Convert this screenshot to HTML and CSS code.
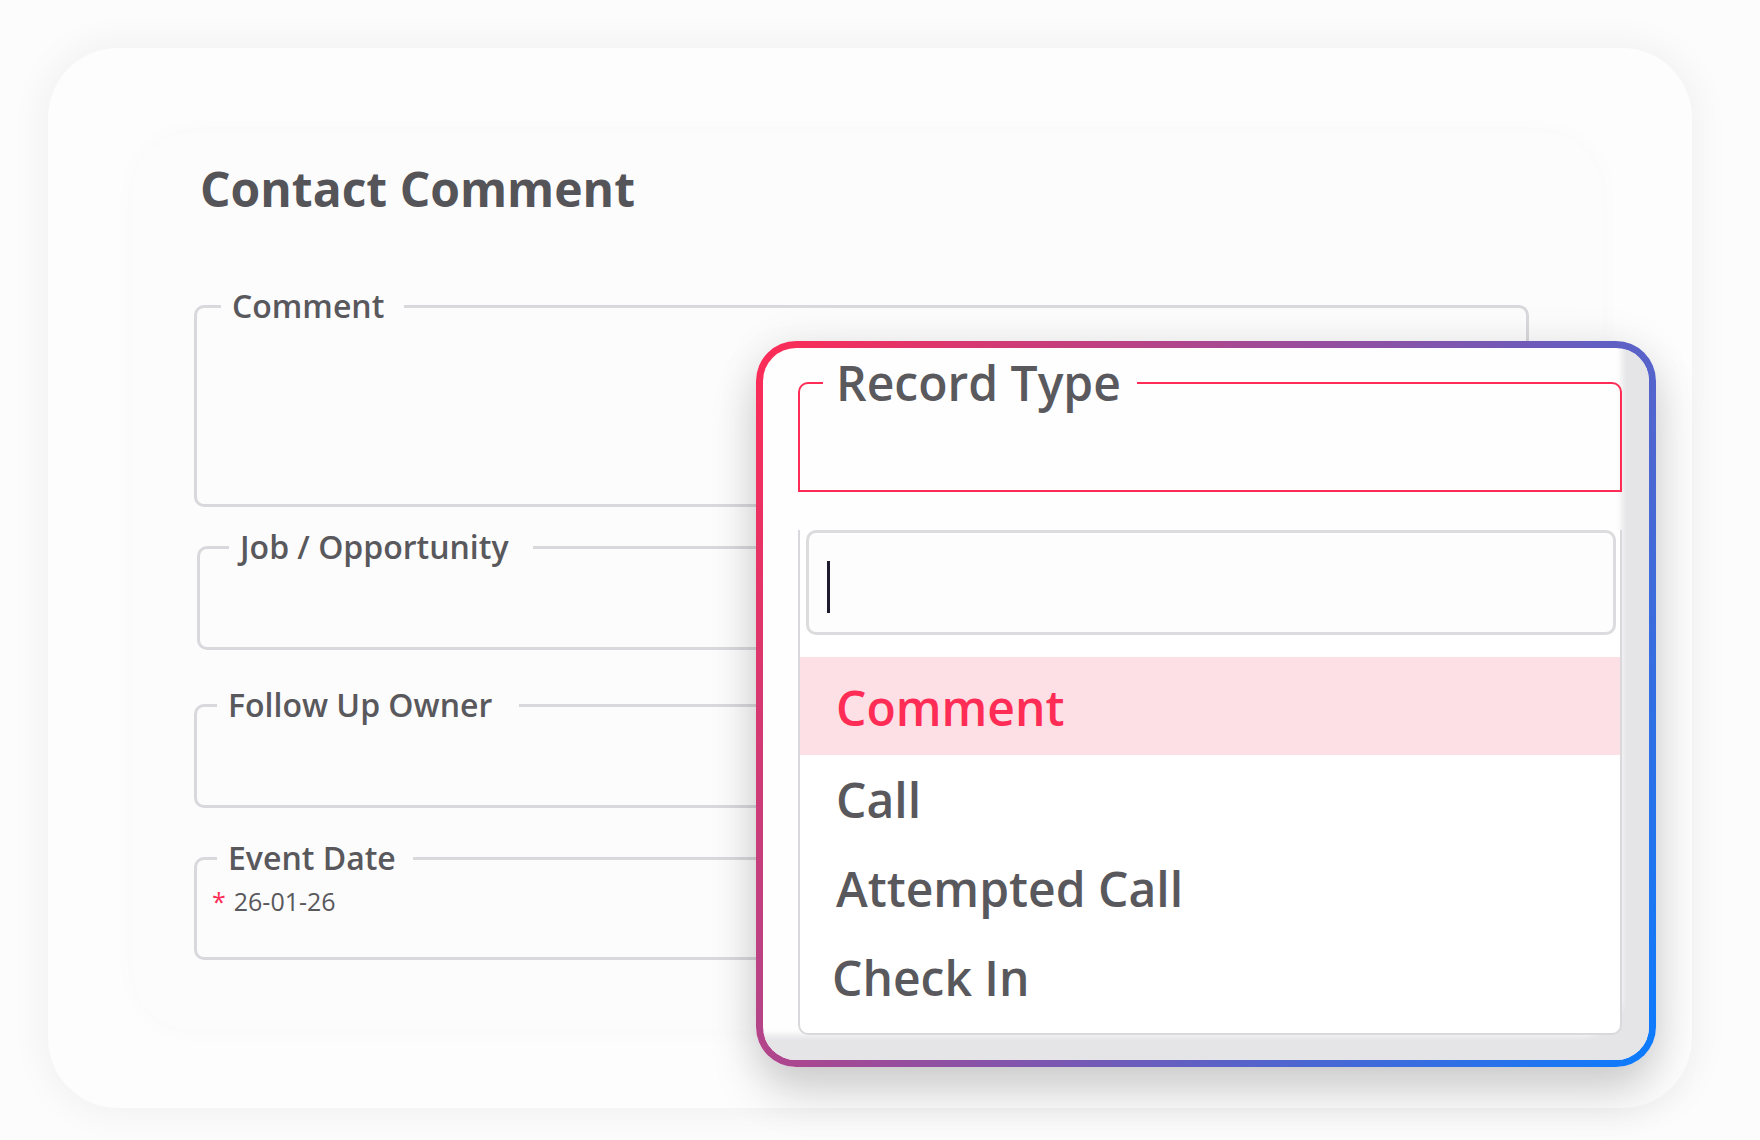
FILE: index.html
```html
<!DOCTYPE html>
<html lang="en">
<head>
<meta charset="utf-8">
<title>Contact Comment</title>
<link rel="stylesheet" href="styles.css">
</head>
<body>
<div class="stage">
  <div class="card">
    <div class="panel">
      <h1 class="title">Contact Comment</h1>
      <fieldset class="field field-comment">
        <legend>Comment</legend>
        <div class="field-body"></div>
      </fieldset>
      <fieldset class="field field-job">
        <legend>Job / Opportunity</legend>
        <div class="field-body"></div>
      </fieldset>
      <fieldset class="field field-owner">
        <legend>Follow Up Owner</legend>
        <div class="field-body"></div>
      </fieldset>
      <fieldset class="field field-date">
        <legend>Event Date</legend>
        <div class="field-body"><span class="req">*</span>26-01-26</div>
      </fieldset>
    </div>

    <div class="popup">
      <div class="popup-inner">
        <fieldset class="rt">
          <legend>Record Type</legend>
          <div class="rt-body"></div>
        </fieldset>
        <div class="listbox">
          <div class="search"><span class="caret"></span></div>
          <ul class="options">
            <li class="opt active">Comment</li>
            <li class="opt">Call</li>
            <li class="opt">Attempted Call</li>
            <li class="opt opt-last">Check In</li>
          </ul>
        </div>
      </div>
    </div>
  </div>
</div>
</body>
</html>
```

FILE: styles.css
```css
* { box-sizing: border-box; }

html, body {
  margin: 0;
  padding: 0;
  overflow: hidden;
}

body {
  background: #fcfcfc;
  font-family: "Open Sans", "Noto Sans", sans-serif;
  color: #59585c;
}

.stage {
  width: 1760px;
  height: 1140px;
  padding: 48px 0 0 48px;
}

.card {
  position: relative;
  width: 1644px;
  height: 1060px;
  background: #fdfdfe;
  border-radius: 70px;
  box-shadow: 0 0 34px 8px rgba(0, 0, 0, 0.045);
  padding: 85px 0 0 85px;
}

.panel {
  width: 1469px;
  height: 897px;
  border-radius: 60px;
  background: #fcfcfd;
  box-shadow: 0 0 26px rgba(0, 0, 0, 0.025);
  padding: 24px 0 0 61px;
  display: flex;
  flex-direction: column;
  align-items: flex-start;
}

.title {
  margin: 0 0 0 6px;
  font-size: 48px;
  line-height: 64px;
  font-weight: 700;
  color: #555458;
}

.field {
  margin: 0;
  padding: 0;
  min-inline-size: 0;
  width: 1335px;
  border: 3px solid #d9d8dc;
  border-radius: 10px;
}

.field legend {
  font-size: 32px;
  line-height: 40px;
  font-weight: 600;
  padding: 0 20px 0 11px;
  margin-left: 24px;
  color: #59585c;
}

.field-body {
  height: 80px;
}

.field-comment { margin-top: 65px; }
.field-comment .field-body { height: 178px; }

.field-job { margin-top: 20px; margin-left: 3px; width: 1332px; }
.field-job legend { margin-left: 29px; padding-right: 24px; }

.field-owner { margin-top: 35px; }
.field-owner legend { margin-left: 20px; padding-right: 27px; }

.field-date { margin-top: 30px; }
.field-date legend { margin-left: 20px; padding-right: 17px; }
.field-date .field-body {
  height: 79px;
  padding: 7px 0 0 15px;
  font-size: 25px;
  line-height: 32px;
  font-weight: 500;
  color: #59585c;
}

.req {
  color: #ff2d55;
  margin-right: 8px;
}

/* Dropdown popup overlay */
.popup {
  position: absolute;
  left: 708px;
  top: 293px;
  width: 900px;
  height: 726px;
  padding: 7px;
  border-radius: 40px;
  background: linear-gradient(120deg, #ff2b55 0%, #0a7cff 100%);
  box-shadow: 0 26px 46px rgba(0, 0, 0, 0.17), 0 0 44px rgba(0, 0, 0, 0.07);
}

.popup-inner {
  height: 100%;
  border-radius: 33px;
  background: #fefefe;
  box-shadow: inset -33px -31px 6px -6px #e5e4e7;
  padding: 3px 27px 0 35px;
}

.rt {
  margin: 0;
  padding: 0;
  min-inline-size: 0;
  border: 2px solid #ff2d55;
  border-radius: 10px 10px 0 0;
}

.rt legend {
  font-size: 48px;
  line-height: 64px;
  font-weight: 600;
  padding: 0 16px 0 13px;
  margin-left: 23px;
  color: #5a595d;
}

.rt-body {
  height: 75px;
}

.listbox {
  background: #ffffff;
  border: 2px solid #d9d8dc;
  border-top: 0;
  border-radius: 0 0 10px 10px;
  padding: 0 0 11px 0;
}

.search {
  margin: 38px 4px 22px 6px;
  height: 105px;
  border: 3px solid #dcdcdf;
  border-radius: 10px;
  padding: 28px 0 0 18px;
  background: #fdfdfd;
}

.caret {
  display: block;
  width: 3px;
  height: 52px;
  background: #1e1b2e;
}

.options {
  list-style: none;
  margin: 0;
  padding: 0;
}

.opt {
  font-size: 48px;
  line-height: 89px;
  font-weight: 600;
  padding-left: 36px;
  color: #59585c;
}

.opt.active {
  height: 98px;
  line-height: 94px;
  padding-top: 4px;
  background: #fde0e6;
  color: #ff2d55;
}

.opt-last {
  padding-left: 32px;
}
```
